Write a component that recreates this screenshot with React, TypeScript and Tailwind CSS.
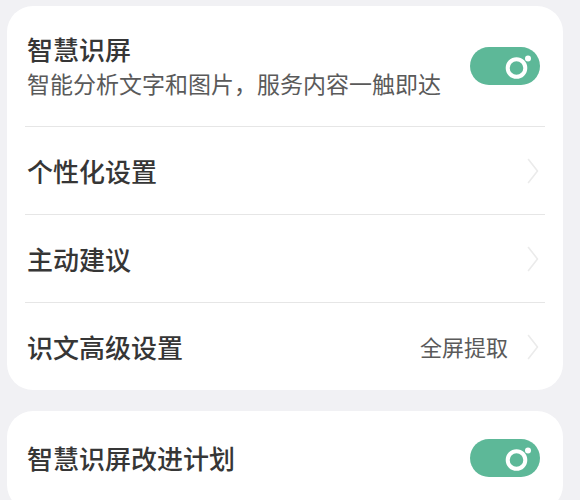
function Toggle() {
  return (
    <div className="w-[70px] h-[38px] rounded-full bg-[#5db898] flex items-center justify-end pr-[8px] shrink-0">
      <svg width="32" height="34" viewBox="0 0 32 34">
        <circle cx="16.5" cy="19" r="8.8" fill="none" stroke="#fff" strokeWidth="4" />
        <circle cx="28" cy="9.5" r="3" fill="#fff" />
      </svg>
    </div>
  );
}

function Chevron() {
  return (
    <svg width="12" height="26" viewBox="0 0 12 26" className="shrink-0">
      <polyline points="1.5,1.5 10.5,13 1.5,24.5" fill="none" stroke="#ebebeb" strokeWidth="1.6" strokeLinecap="round" strokeLinejoin="round" />
    </svg>
  );
}

function Row({ label, value }: { label: string; value?: string }) {
  return (
    <div className="h-[88px] flex items-center justify-between border-t border-[#e6e6e6] mx-[18px]">
      <span className="text-[26px] font-medium text-[#363636] pl-[2px]">{label}</span>
      <div className="flex items-center gap-[19px] pr-[6px]">
        {value && <span className="text-[22px] text-[#5a5a5a]">{value}</span>}
        <Chevron />
      </div>
    </div>
  );
}

export default function App() {
  return (
    <div
      className="min-h-screen bg-[#f1f1f4] pl-[7px] pr-[17px] pt-[6px] space-y-[21px]"
      style={{ fontFamily: '"Noto Sans CJK SC", "Noto Sans", sans-serif' }}
    >
      <div className="bg-white rounded-[26px]">
        <div className="h-[120px] flex items-center justify-between px-[20px]">
          <div className="flex flex-col">
            <span className="text-[26px] font-medium text-[#363636] leading-[34px]">智慧识屏</span>
            <span className="text-[23px] text-[#5a5a5a] leading-[34px]">
              智能分析文字和图片，服务内容一触即达
            </span>
          </div>
          <div className="mr-[3px]">
            <Toggle />
          </div>
        </div>
        <Row label="个性化设置" />
        <Row label="主动建议" />
        <Row label="识文高级设置" value="全屏提取" />
      </div>
      <div className="bg-white rounded-[26px] h-[100px] flex items-start justify-between px-[20px] pt-[28px]">
        <span className="text-[26px] font-medium text-[#363636] leading-[38px]">智慧识屏改进计划</span>
        <div className="mr-[3px]">
          <Toggle />
        </div>
      </div>
    </div>
  );
}
